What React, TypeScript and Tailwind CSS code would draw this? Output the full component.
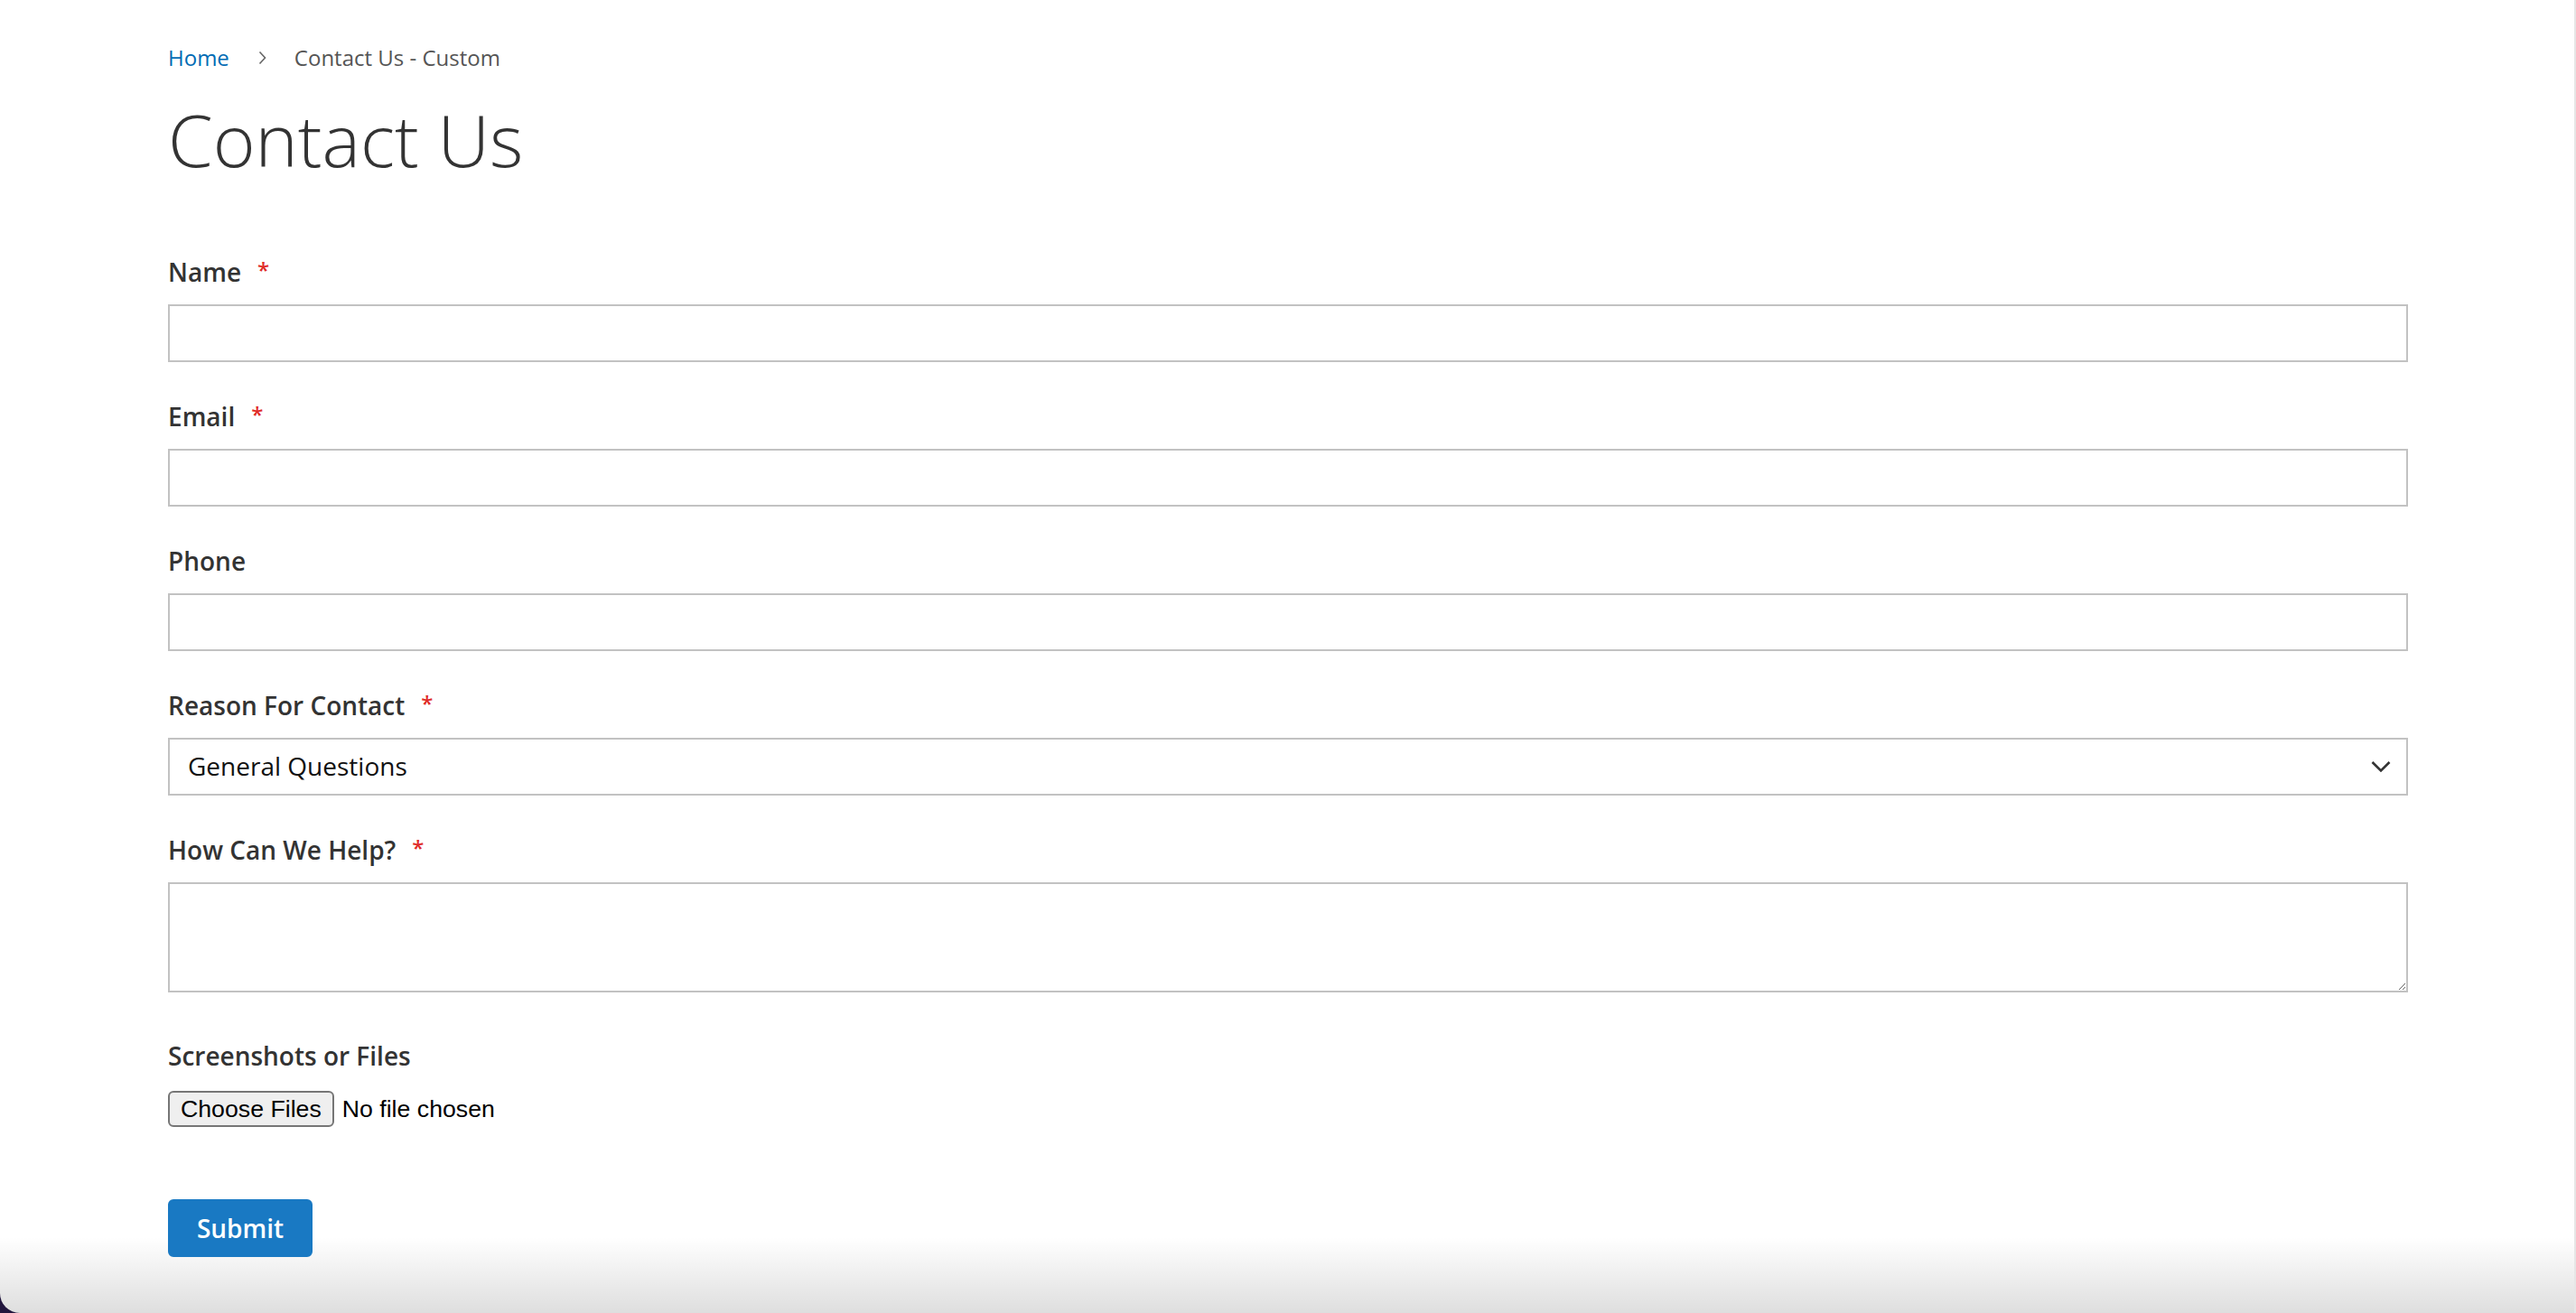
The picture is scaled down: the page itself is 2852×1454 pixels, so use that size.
import React from "react";

function Field({
  label,
  required,
  children,
  mb = "mb-[38px]",
}: {
  label: string;
  required?: boolean;
  children: React.ReactNode;
  mb?: string;
}) {
  return (
    <div className={mb}>
      <label className="mb-[16px] block pt-[2px] text-[28px] font-semibold leading-[40px] text-[#333]">
        {label}
        {required && (
          <span className="ml-[18px] align-top text-[24px] leading-[36px] text-[#e02b27]">*</span>
        )}
      </label>
      {children}
    </div>
  );
}

export default function App() {
  const inputCls =
    "block h-[64px] w-full border-2 border-[#c2c2c2] bg-white px-[18px] text-[28px] text-[#111] outline-none";
  return (
    <div className="relative h-[1454px] w-[2852px] bg-[#22163d] font-['Open_Sans',sans-serif]">
      <div className="relative flex h-full overflow-hidden rounded-bl-[22px] bg-white">
        <div className="pointer-events-none absolute inset-x-0 bottom-0 h-[84px] bg-[linear-gradient(to_bottom,rgba(0,0,0,0),rgba(0,0,0,0.13))]" />
        <main className="relative z-10 flex-1 pl-[186px] pt-[47px]">
          <nav className="flex items-center text-[24px] leading-[34px]">
            <a className="text-[#006bb4]" href="#">
              Home
            </a>
            <svg className="ml-[32px] mr-[31px]" width="9" height="16" viewBox="0 0 9 16">
              <polyline points="1.5,1.5 7.5,8 1.5,14.5" fill="none" stroke="#666" strokeWidth="1.6" />
            </svg>
            <span className="text-[#555]">Contact Us - Custom</span>
          </nav>
          <h1 className="mt-[29px] text-[80px] font-light leading-[88px] text-[#333]">Contact Us</h1>
          <form className="mt-[81px] w-[2480px]">
            <Field label="Name" required>
              <input className={inputCls} type="text" />
            </Field>
            <Field label="Email" required>
              <input className={inputCls} type="email" />
            </Field>
            <Field label="Phone">
              <input className={inputCls} type="tel" />
            </Field>
            <Field label="Reason For Contact" required>
              <div className="relative">
                <select className="block h-[64px] w-full appearance-none border-2 border-[#c2c2c2] bg-white pb-[2px] pl-[20px] text-[28px] text-[#111] outline-none">
                  <option>General Questions</option>
                </select>
                <svg
                  className="pointer-events-none absolute right-[19px] top-1/2 -translate-y-1/2"
                  width="22"
                  height="13"
                  viewBox="0 0 22 13"
                >
                  <polyline points="1.5,1.5 11,11 20.5,1.5" fill="none" stroke="#333" strokeWidth="2.6" />
                </svg>
              </div>
            </Field>
            <Field label="How Can We Help?" required mb="mb-[50px]">
              <textarea className="block h-[122px] w-full border-2 border-[#c2c2c2] bg-white px-[18px] py-[10px] text-[28px] outline-none" />
            </Field>
            <div>
              <label className="mb-[19px] block text-[28px] font-semibold leading-[40px] text-[#333]">
                Screenshots or Files
              </label>
              <div className="flex items-center font-['Liberation_Sans',Arial,sans-serif] text-[26.7px] text-black">
                <button
                  type="button"
                  className="h-[40px] rounded-[6px] border-2 border-[#767676] bg-[#efefef] px-[12px] leading-[34px]"
                >
                  Choose Files
                </button>
                <span className="ml-[9px]">No file chosen</span>
              </div>
            </div>
            <button
              type="button"
              className="mt-[80px] h-[64px] w-[160px] rounded-[6px] border-2 border-[#1979c3] bg-[#1979c3] text-[28px] font-semibold text-white"
            >
              Submit
            </button>
          </form>
        </main>
        <div className="relative z-10 w-[2px] bg-[#e6e6e6]" />
      </div>
    </div>
  );
}
